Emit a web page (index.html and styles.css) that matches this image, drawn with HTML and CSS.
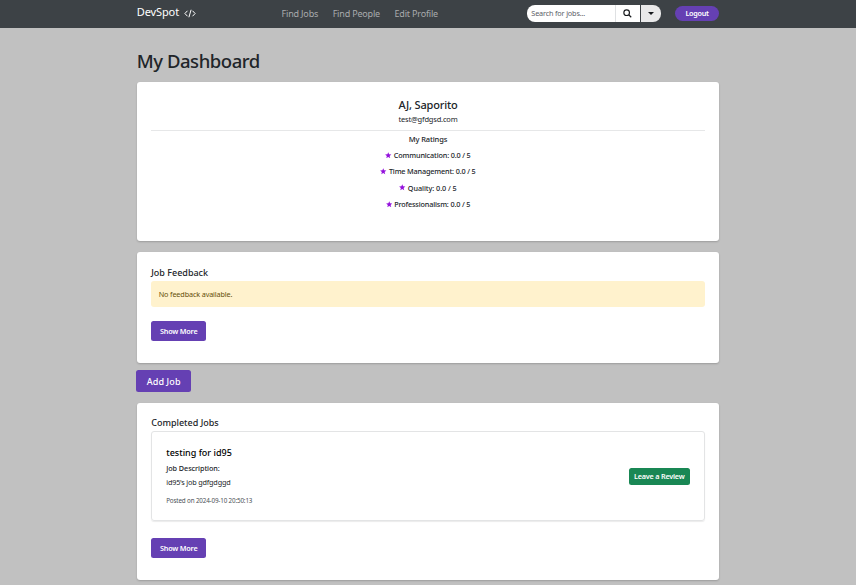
FILE: index.html
```html
<!DOCTYPE html>
<html lang="en">
<head>
<meta charset="utf-8">
<title>DevSpot</title>
<link rel="stylesheet" href="styles.css">
</head>
<body>
<header class="navbar">
  <div class="container navbar-inner">
    <a class="brand">DevSpot
      <svg class="code" viewBox="0 0 24 18"><path d="M7 3.5 1.8 9 7 14.5M17 3.5 22.2 9 17 14.5M14.2 1.5 9.8 16.5"/></svg>
    </a>
    <nav class="links"><a>Find Jobs</a><a>Find People</a><a>Edit Profile</a></nav>
    <form class="search">
      <span class="field">Search for jobs...</span>
      <span class="go"><svg viewBox="0 0 18 18"><circle cx="7.3" cy="7.3" r="5.6"/><path d="m11.5 11.5 5 5"/></svg></span>
      <span class="toggle"></span>
    </form>
    <a class="logout">Logout</a>
  </div>
</header>
<main class="container">
  <h1>My Dashboard</h1>
  <section class="card profile">
    <h2>AJ, Saporito</h2>
    <p class="email">test@gfdgsd.com</p>
    <hr>
    <h3>My Ratings</h3>
    <ul class="ratings">
      <li><svg class="star" viewBox="0 0 20 19"><path d="M10 0l2.6 6.6 7.1.4-5.5 4.5 1.9 7L10 14.6l-6.1 3.9 1.9-7L.3 7l7.1-.4z"/></svg>Communication: 0.0 / 5</li>
      <li><svg class="star" viewBox="0 0 20 19"><path d="M10 0l2.6 6.6 7.1.4-5.5 4.5 1.9 7L10 14.6l-6.1 3.9 1.9-7L.3 7l7.1-.4z"/></svg>Time Management: 0.0 / 5</li>
      <li class="quality"><svg class="star" viewBox="0 0 20 19"><path d="M10 0l2.6 6.6 7.1.4-5.5 4.5 1.9 7L10 14.6l-6.1 3.9 1.9-7L.3 7l7.1-.4z"/></svg>Quality: 0.0 / 5</li>
      <li><svg class="star" viewBox="0 0 20 19"><path d="M10 0l2.6 6.6 7.1.4-5.5 4.5 1.9 7L10 14.6l-6.1 3.9 1.9-7L.3 7l7.1-.4z"/></svg>Professionalism: 0.0 / 5</li>
    </ul>
  </section>
  <section class="card feedback">
    <h4>Job Feedback</h4>
    <div class="alert">No feedback available.</div>
    <a class="btn">Show More</a>
  </section>
  <a class="btn add">Add Job</a>
  <section class="card completed">
    <h4>Completed Jobs</h4>
    <article class="job">
      <div>
        <h5>testing for id95</h5>
        <p class="label">Job Description:</p>
        <p class="text">id95's job gdfgdggd</p>
        <p class="posted">Posted on 2024-09-10 20:50:13</p>
      </div>
      <a class="review">Leave a Review</a>
    </article>
    <a class="btn">Show More</a>
  </section>
</main>
</body>
</html>
```
FILE: styles.css
```css
* { box-sizing: border-box; }
body {
  margin: 0;
  height: 585px;
  overflow: hidden;
  background: #c1c1c1;
  color: #212529;
  font: 7.25px/12px "Noto Sans", sans-serif;
  white-space: nowrap;
}
h1, h2, h3, h4, h5, p, ul { margin: 0; padding: 0; font-weight: 500; }
p { font-weight: 400; }
.container { width: 582.6px; margin: 0 auto; }

.navbar { height: 28px; background: #3d4246; }
.navbar-inner { display: flex; height: 28px; }
.brand {
  display: flex;
  width: 145px;
  padding-top: 3px;
  color: #fff;
  font-size: 11px;
  line-height: 17px;
  letter-spacing: -.1px;
}
.code { width: 12px; height: 9px; margin: 6px 0 0 5px; fill: none; stroke: #fff; stroke-width: 2; }
.links {
  display: flex;
  gap: 14.5px;
  width: 245.5px;
  padding-top: 6px;
  color: #a9abad;
  font-size: 9px;
  line-height: 16px;
  letter-spacing: -.18px;
}
.search { display: flex; width: 134px; height: 17px; margin: 5px 14px 0 0; line-height: 17px; }
.field {
  width: 88px;
  padding-left: 4.5px;
  border-radius: 8px 0 0 8px;
  background: #fff;
  color: #5b6067;
  letter-spacing: -.16px;
}
.go { width: 25px; border-left: 1px solid #dfe1e3; background: #fff; }
.go svg { display: block; width: 9px; height: 9px; margin: 4px 0 0 7px; fill: none; stroke: #16191c; stroke-width: 2.3; }
.toggle { width: 20px; margin-left: 1px; padding: 7px 0 0 7px; border-radius: 0 8px 8px 0; background: #e9e9ea; }
.toggle::before { content: ""; display: block; width: 0; border: 3px solid transparent; border-top-color: #16191c; border-bottom: 0; }
.logout {
  width: 44.5px;
  height: 15px;
  margin-top: 5.5px;
  border-radius: 8px;
  background: #6540b3;
  color: #fff;
  font-weight: 600;
  line-height: 15px;
  letter-spacing: -.3px;
  text-align: center;
}

h1 { height: 54px; padding-top: 20px; font-size: 18.5px; line-height: 26px; letter-spacing: -.45px; }
.card { padding: 14px 14.5px; border-radius: 3px; background: #fff; box-shadow: 0 1px 2px rgba(0, 0, 0, .2); }
.profile { height: 159px; text-align: center; }
.profile h2 { padding-top: 1px; font-size: 11px; line-height: 16px; letter-spacing: -.17px; }
.email { font-size: 7.5px; letter-spacing: -.18px; }
hr { height: 1px; margin: 5px 0 2px; border: 0; background: #e6e7e8; }
.profile h3 { font-size: 7.5px; letter-spacing: -.12px; }
.ratings { padding-top: 2px; list-style: none; line-height: 16.25px; letter-spacing: -.15px; }
.quality { letter-spacing: -.05px; }
.star { width: 6.5px; height: 6.5px; margin-right: 2px; vertical-align: -.3px; fill: #9412dc; }

.feedback { height: 111px; margin-top: 11px; }
h4 { font-size: 9px; line-height: 14px; }
.alert { height: 26px; margin: 1px 0 14px; padding-left: 7.5px; border-radius: 3px; background: #fff2cd; color: #66500a; line-height: 26px; letter-spacing: -.14px; }
.btn {
  display: block;
  width: 55px;
  height: 20px;
  border-radius: 2.5px;
  background: #6540b3;
  color: #fff;
  font-weight: 600;
  line-height: 20px;
  letter-spacing: -.2px;
  text-align: center;
}
.add { height: 22px; margin: 7px 0 11px -.5px; font-size: 9px; font-weight: 500; line-height: 23px; letter-spacing: .1px; }

.completed { height: 177px; padding-top: 13px; }
.completed h4 { padding-bottom: 1px; line-height: 14px; }
.job {
  display: flex;
  justify-content: space-between;
  align-items: center;
  height: 90px;
  margin-bottom: 17px;
  padding: 0 14px;
  border: 1px solid #e3e4e5;
  border-radius: 3px;
  box-shadow: 0 1px 1px rgba(0, 0, 0, .08);
}
h5 { color: #000; font-size: 9px; line-height: 16px; }
.label { padding-top: 1px; font-weight: 500; letter-spacing: -.07px; }
.text { padding-top: 2px; letter-spacing: -.18px; }
.posted { padding-top: 7px; color: #4b5055; font-size: 6.25px; letter-spacing: -.14px; }
.review {
  width: 61px;
  height: 17px;
  border-radius: 2.5px;
  background: #198754;
  color: #fff;
  font-weight: 600;
  line-height: 17px;
  letter-spacing: -.22px;
  text-align: center;
}
```
